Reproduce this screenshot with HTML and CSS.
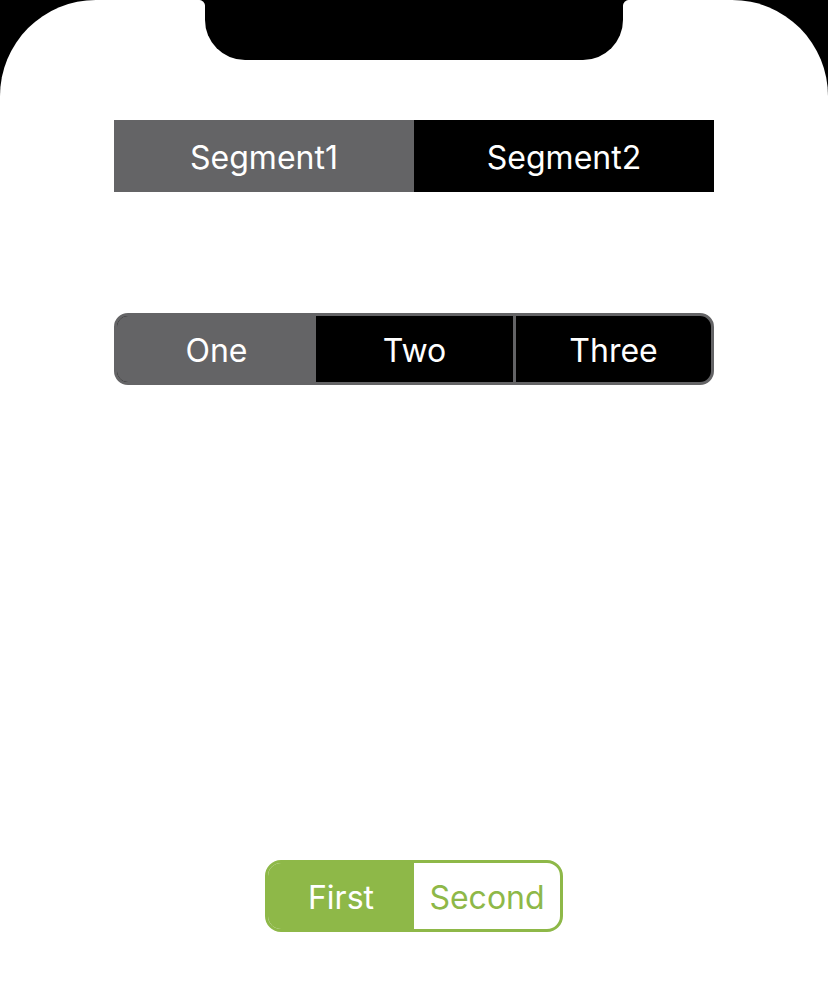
FILE: index.html
```html
<!DOCTYPE html>
<html lang="en">
<head>
<meta charset="utf-8">
<title>Segmented Controls</title>
<link rel="stylesheet" href="styles.css">
</head>
<body>
<div class="screen">
  <div class="notch"></div>
  <main class="content">
    <div class="seg seg-plain">
      <div class="item selected">Segment1</div>
      <div class="item">Segment2</div>
    </div>
    <div class="seg seg-rounded">
      <div class="item one selected">One</div>
      <div class="item two">Two</div>
      <div class="divider"></div>
      <div class="item three">Three</div>
    </div>
    <div class="seg seg-green">
      <div class="item selected">First</div>
      <div class="item">Second</div>
    </div>
  </main>
</div>
</body>
</html>
```
FILE: styles.css
```css
html, body {
  margin: 0;
  padding: 0;
  background: #000;
}
body {
  width: 828px;
  height: 1002px;
  overflow: hidden;
  font-family: Inter, "Liberation Sans", sans-serif;
}
.screen {
  position: relative;
  height: 1002px;
  background: #fff;
  border-radius: 96px 96px 0 0;
}
.notch {
  position: absolute;
  left: 205px;
  top: 0;
  width: 418px;
  height: 60px;
  background: #000;
  border-radius: 0 0 40px 40px;
}
.notch::before,
.notch::after {
  content: "";
  position: absolute;
  top: 0;
  width: 6px;
  height: 6px;
}
.notch::before {
  left: -6px;
  background: radial-gradient(circle at 0 100%, transparent 5.5px, #000 6.5px);
}
.notch::after {
  right: -6px;
  background: radial-gradient(circle at 100% 100%, transparent 5.5px, #000 6.5px);
}
.content {
  display: flex;
  flex-direction: column;
  align-items: center;
  padding-top: 120px;
}
.seg {
  display: flex;
  box-sizing: border-box;
  height: 72px;
  font-size: 32px;
  color: #fff;
}
.item {
  flex: 1;
  display: flex;
  align-items: center;
  justify-content: center;
  padding-top: 2px;
}
.seg-plain {
  width: 600px;
  background: #000;
}
.seg-plain .selected {
  background: #646466;
}
.seg-rounded {
  width: 600px;
  margin-top: 121px;
  border: 3px solid #646466;
  border-radius: 14px;
  overflow: hidden;
  background: #000;
}
.seg-rounded .selected {
  background: #646466;
}
.seg-rounded .one {
  flex: 0 0 199px;
}
.seg-rounded .two {
  flex: 0 0 197px;
}
.seg-rounded .three {
  flex: 1 1 auto;
}
.divider {
  width: 3px;
  background: #646466;
}
.seg-green {
  width: 298px;
  margin-top: 475px;
  border: 3px solid #8eb848;
  border-radius: 16px;
  overflow: hidden;
  background: #fff;
  color: #8eb848;
}
.seg-green .selected {
  background: #8eb848;
  color: #fff;
}
```
